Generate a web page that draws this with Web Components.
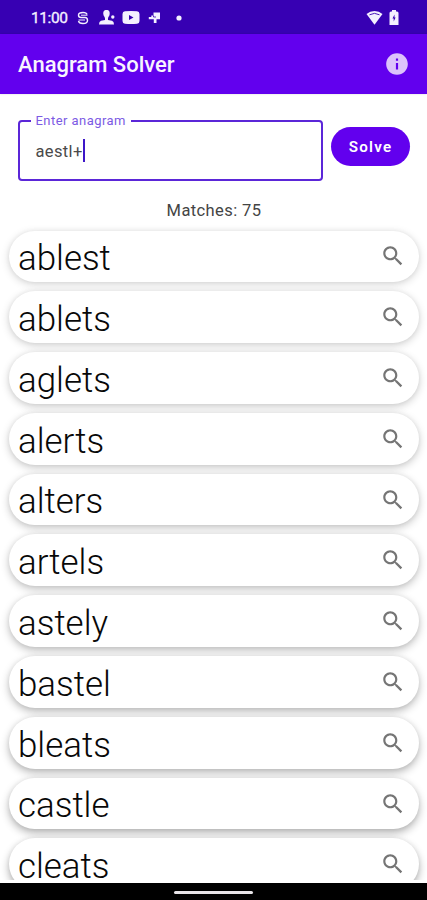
<!DOCTYPE html>
<html lang="en">
<head>
<meta charset="utf-8">
<title>Anagram Solver</title>
<style>
   html, body {
      margin: 0;
      height: 100%;
      overflow: hidden;
      background: #fff;
      font-family: Roboto, "Liberation Sans", sans-serif;
   }
</style>
</head>
<body>
<anagram-app></anagram-app>

<script>
function define(name, html, setup) {
   const template = document.createElement('template');
   template.innerHTML = html;

   customElements.define(name, class extends HTMLElement {
      constructor() {
         super();
         this.attachShadow({ mode: 'open' });
         this.shadowRoot.append(template.content.cloneNode(true));
         if (setup) setup(this.shadowRoot);
      }
   });
}

define('status-bar', `
   <style>
      :host {
         display: flex;
         align-items: center;
         box-sizing: border-box;
         height: 33.5px;
         padding: 2px 28px 0 31px;
         background: #3700b3;
         color: #f4f0ff;
         font-size: 15.5px;
         font-weight: 400;
      }
      .time { width: 46px; letter-spacing: -0.4px; -webkit-text-stroke: .35px; }
      svg { display: block; fill: currentColor; }
      .space { flex: 1; }
   </style>
   <span class="time">11:00</span>
   <svg width="12" height="14" viewBox="0 0 12 14"><path d="M10 3.500Q9.500 1.500 6 1.500Q1.500 1.500 1.500 4T4 6.500H8Q10.500 6.500 10.500 9.500T6 12.500Q2 12.500 1.500 10" fill="none" stroke="currentColor" stroke-width="1.400"/><path d="M4 4.200H10.500M1.500 9H8" stroke="currentColor" stroke-width="1"/></svg>
   <svg style="margin-left:10px" width="17" height="15" viewBox="0 0 17 15"><path d="M7.500 0C10.300 0 11 2 10.600 4.500C10.400 6.300 9 7 9 8.500V10L13 10.800Q15 11.500 15 14.500H0Q0 11.500 2 10.800L6 10V8.500C6 7 4.600 6.300 4.400 4.500C4 2 4.700 0 7.500 0Z"/><circle cx="13.800" cy="7" r="1.700"/></svg>
   <svg style="margin-left:6px" width="18" height="13" viewBox="0 0 18 13"><path fill-rule="evenodd" d="M3 .3Q9-.3 15 .3Q17.500.5 17.500 3V10Q17.500 12.500 15 12.700Q9 13.300 3 12.700Q.5 12.500.5 10V3Q.5.5 3 .3ZM7 4V9L11.500 6.500Z"/></svg>
   <svg style="margin-left:8px" width="14" height="14" viewBox="0 0 14 14"><path d="M5.500 1.500H12V8.200H8.500V12H5.800V8.200H.8V6H3.300V4.500H5.500Z"/><path d="M5.500 4.500V6H8" fill="none" stroke="#3700b3" stroke-width=".8"/></svg>
   <svg style="margin-left:14px" width="6" height="6" viewBox="0 0 6 6"><circle cx="3" cy="3" r="2.600"/></svg>
   <span class="space"></span>
   <svg width="17" height="14" viewBox="0 0 17 14"><path d="M8.500 0Q13 0 16.500 3L8.500 13.800L.5 3Q4 0 8.500 0Z"/><path d="M3.500 3.800Q8.500.9 13.500 3.800" fill="none" stroke="#3700b3" stroke-width=".9"/></svg>
   <svg style="margin-left:6px" width="10" height="15" viewBox="0 0 10 15"><path fill-rule="evenodd" d="M3 0H7V1.500H8Q9.500 1.500 9.500 3V15H.5V3Q.5 1.500 2 1.500H3ZM5.500 4.500L3.500 8.500H4.700V11.500L6.600 7.500H5.500Z"/></svg>
`);

define('app-bar', `
   <style>
      :host {
         display: flex;
         align-items: center;
         justify-content: space-between;
         box-sizing: border-box;
         height: 60.5px;
         padding: 1px 17px 0 18px;
         background: #6200ee;
         color: #f8f4ff;
         font-size: 22px;
         font-weight: 500;
         box-shadow: 0 0 2px rgba(0, 0, 0, .15);
      }
      svg { margin-top: -1px; }
   </style>
   <span><slot></slot></span>
   <svg width="26" height="26" viewBox="0 0 24 24" fill="#dcc2fb"><path d="M12 2C6.480 2 2 6.480 2 12s4.480 10 10 10 10-4.480 10-10S17.520 2 12 2zm1 15h-2v-6h2v6zm0-8h-2V7h2v2z"/></svg>
`);

define('text-field', `
   <style>
      :host { display: block; }
      fieldset {
         box-sizing: border-box;
         width: 304.5px;
         height: 67px;
         margin: 0;
         padding: 0 0 0 15.5px;
         border: 2px solid #5b26d8;
         border-radius: 4px;
         min-width: 0;
      }
      legend {
         margin-left: -5px;
         padding: 0 5px;
         height: 14px;
         line-height: 14px;
         color: #7c5ae4;
         font-size: 13px;
         letter-spacing: .45px;
      }
      .value {
         display: flex;
         align-items: center;
         height: 24px;
         margin-top: 11px;
         color: #4a4a4a;
         font-size: 16.5px;
         letter-spacing: .35px;
      }
      .caret { width: 2px; height: 23px; margin-top: -1px; background: #3d16c8; }
   </style>
   <fieldset>
      <legend>Enter anagram</legend>
      <div class="value"><slot></slot><span class="caret"></span></div>
   </fieldset>
`);

define('solve-button', `
   <style>
      :host {
         display: flex;
         align-items: center;
         justify-content: center;
         width: 79px;
         height: 39px;
         border-radius: 20px;
         background: #6200ee;
         color: #fff;
         font-size: 15.2px;
         font-weight: 600;
         letter-spacing: 1.25px;
      }
   </style>
   <slot></slot>
`);

define('word-card', `
   <style>
      :host {
         display: flex;
         align-items: center;
         justify-content: space-between;
         box-sizing: border-box;
         height: 51.8px;
         padding: 0 13px 0 9px;
         border-radius: 26px;
         background: #fff;
         color: #080808;
         font-size: 34.9px;
         font-weight: 280;
         line-height: 26px;
         box-shadow: 0 var(--drop, 3px) 9px rgba(0, 0, 0, var(--shade, .2)), 0 0 5px rgba(0, 0, 0, .05);
      }
      span { padding-top: 5.5px; }
   </style>
   <span><slot></slot></span>
   <svg width="26" height="26" viewBox="0 0 24 24" fill="#757575"><path d="M15.500 14h-.79l-.28-.27C15.410 12.590 16 11.110 16 9.500 16 5.910 13.090 3 9.500 3S3 5.910 3 9.500 5.910 16 9.500 16c1.610 0 3.090-.59 4.230-1.570l.27.280v.790l5 4.990L20.490 19l-4.990-5zm-6 0C7.010 14 5 11.990 5 9.500S7.010 5 9.500 5 14 7.010 14 9.500 11.990 14 9.500 14z"/></svg>
`);

define('word-list', `
   <style>
      :host {
         display: flex;
         flex-direction: column;
         gap: 9px;
         box-sizing: border-box;
         min-height: 0;
         padding: 5.5px 8px 0 9px;
         overflow: hidden;
      }
      word-card { flex: none; }
   </style>
`, (root) => {
   const words = ['ablest', 'ablets', 'aglets', 'alerts', 'alters', 'artels',
      'astely', 'bastel', 'bleats', 'castle', 'cleats'];

   words.forEach((word, i) => {
      const card = document.createElement('word-card');
      card.textContent = word;
      // Shadows get deeper towards the bottom of the screen
      card.style.setProperty('--drop', `${2 + i * 0.2}px`);
      card.style.setProperty('--shade', 0.17 + i * 0.015);
      root.append(card);
   });
});

define('nav-bar', `
   <style>
      :host {
         display: flex;
         justify-content: center;
         align-items: center;
         box-sizing: border-box;
         height: 17.5px;
         padding-top: 2px;
         background: #000;
      }
      span { width: 79px; height: 3.5px; border-radius: 2px; background: #e8e4e8; }
   </style>
   <span></span>
`);

define('anagram-app', `
   <style>
      :host {
         display: flex;
         flex-direction: column;
         height: 900px;
         background: #fff;
      }
      status-bar, app-bar, nav-bar { flex: none; }
      .search {
         display: flex;
         align-items: flex-start;
         gap: 8.500px;
         padding: 20px 17px 0 18px;
      }
      solve-button { margin-top: 13px; }
      .matches {
         height: 20px;
         margin: 20px 0 4px;
         padding-left: 1px;
         line-height: 20px;
         text-align: center;
         color: #444;
         font-size: 16.5px;
         letter-spacing: .4px;
      }
      word-list { flex: 1; margin-bottom: 3px; }
   </style>
   <status-bar></status-bar>
   <app-bar>Anagram Solver</app-bar>
   <div class="search">
      <text-field>aestl+</text-field>
      <solve-button>Solve</solve-button>
   </div>
   <div class="matches">Matches: 75</div>
   <word-list></word-list>
   <nav-bar></nav-bar>
`);
</script>
</body>
</html>
